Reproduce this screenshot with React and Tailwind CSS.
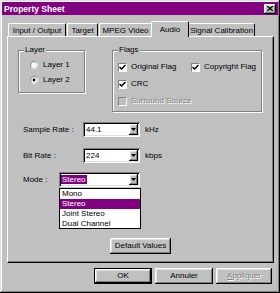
import React from 'react';

const raised =
  'shadow-[inset_-1px_-1px_0_#000,inset_1px_1px_0_#fff,inset_-2px_-2px_0_#808080,inset_2px_2px_0_#dfdfdf]';
const sunken =
  'shadow-[inset_1px_1px_0_#808080,inset_-1px_-1px_0_#fff,inset_2px_2px_0_#000,inset_-2px_-2px_0_#dfdfdf]';

const Tab = ({ label, active, width }) => (
  <div
    className={
      active
        ? `relative z-10 -mx-[2px] h-[16px] -mb-[1px] pt-[3px] text-center bg-[#c0c0c0] border-t border-l border-white border-r border-r-black rounded-t-[2px] ${width}`
        : `h-[13px] pt-[2px] text-center border-t border-l border-white border-r border-r-black rounded-t-[2px] ${width}`
    }
  >
    {label}
  </div>
);

const Radio = ({ checked }) => (
  <svg width="8" height="8" viewBox="0 0 8 8">
    <circle cx="4" cy="4" r="3.5" fill="#fff" stroke="#808080" />
    <path d="M6.6 1.4 A3.5 3.5 0 0 1 1.4 6.6" fill="none" stroke="#fff" />
    {checked && <circle cx="4" cy="4" r="1.4" fill="#000" />}
  </svg>
);

const Check = ({ checked, disabled }) => (
  <span
    className={`flex items-center justify-center w-[9px] h-[9px] border-t border-l border-[#808080] border-b-white border-r-white border-b border-r ${
      disabled ? 'bg-[#c0c0c0]' : 'bg-white'
    }`}
  >
    {checked && (
      <svg width="7" height="7" viewBox="0 0 7 7">
        <path d="M0.5 3 L2.5 5 L6.5 1" fill="none" stroke="#000" strokeWidth="1.5" />
      </svg>
    )}
  </span>
);

const Combo = ({ value, width, selected }) => (
  <div className={`flex items-center h-[15px] bg-white ${sunken} ${width} pl-[2px] pr-[2px]`}>
    <div className="flex-1 min-w-0">
      {selected ? (
        <span className="bg-[#800080] text-white px-[1px]">{value}</span>
      ) : (
        <span className="px-[1px]">{value}</span>
      )}
    </div>
    <div className={`flex items-center justify-center w-[9px] h-[11px] bg-[#c0c0c0] ${raised}`}>
      <svg width="5" height="3" viewBox="0 0 5 3">
        <path d="M0 0 H5 L2.5 3 Z" fill="#000" />
      </svg>
    </div>
  </div>
);

const GroupBox = ({ title, className, children }) => (
  <div className={`relative border border-[#808080] shadow-[1px_1px_0_#fff,inset_1px_1px_0_#fff] ${className}`}>
    <span className="absolute -top-[6px] left-[5px] bg-[#c0c0c0] px-[1px] leading-[10px]">{title}</span>
    {children}
  </div>
);

const Button = ({ children, className, isDefault, disabled }) => (
  <div
    className={`flex items-center justify-center bg-[#c0c0c0] ${
      isDefault ? 'border border-black' : ''
    } ${className}`}
  >
    <div className={`flex-1 self-stretch flex items-center justify-center ${raised}`}>
      {disabled ? (
        <span className="text-[#808080] [text-shadow:1px_1px_0_#fff]">{children}</span>
      ) : (
        children
      )}
    </div>
  </div>
);

export default function App() {
  return (
    <div className="w-[280px] h-[293px] bg-[#c0c0c0] p-[2px] flex flex-col whitespace-nowrap text-black text-[8px] leading-[10px] font-['Liberation_Sans',Arial,sans-serif] shadow-[inset_-1px_-1px_0_#000,inset_1px_1px_0_#dfdfdf,inset_-2px_-2px_0_#808080,inset_2px_2px_0_#fff]">
      {/* title bar */}
      <div className="h-[13px] bg-[#800080] flex items-center justify-between pl-[2px] pr-[2px]">
        <span className="text-white font-bold text-[8.5px]">Property Sheet</span>
        <div className={`w-[12px] h-[10px] bg-[#c0c0c0] flex items-center justify-center ${raised}`}>
          <svg width="6" height="5" viewBox="0 0 6 5">
            <path d="M0 0 L6 5 M6 0 L0 5" stroke="#000" strokeWidth="1.3" />
          </svg>
        </div>
      </div>

      {/* tabs */}
      <div className="flex items-end h-[21px] pl-[6px] gap-[1px]">
        <Tab label="Input / Output" width="w-[58px]" />
        <Tab label="Target" width="w-[31px]" />
        <Tab label="MPEG Video" width="w-[53px]" />
        <Tab label="Audio" active width="w-[38px]" />
        <Tab label="Signal Calibration" width="w-[67px]" />
      </div>

      {/* panel */}
      <div className="ml-[5px] mr-[4px] h-[227px] border-t border-l border-white border-r border-b border-r-black border-b-black shadow-[inset_-1px_-1px_0_#808080] flex flex-col">
        <div className="flex items-start mt-[13px] ml-[10px] gap-[27px]">
          <GroupBox title="Layer" className="w-[67px] h-[43px]">
            <div className="flex flex-col gap-[5px] pl-[11px] pt-[9px]">
              <div className="flex items-center gap-[5px] h-[10px]">
                <Radio />
                <span>Layer 1</span>
              </div>
              <div className="flex items-center gap-[5px] h-[10px]">
                <Radio checked />
                <span>Layer 2</span>
              </div>
            </div>
          </GroupBox>
          <GroupBox title="Flags" className="w-[150px] h-[62px]">
            <div className="flex flex-col gap-[7px] pl-[5px] pt-[11px]">
              <div className="flex h-[10px]">
                <div className="flex items-center gap-[4px] w-[73px]">
                  <Check checked />
                  <span>Original Flag</span>
                </div>
                <div className="flex items-center gap-[4px]">
                  <Check checked />
                  <span>Copyright Flag</span>
                </div>
              </div>
              <div className="flex items-center gap-[4px] h-[10px]">
                <Check checked />
                <span>CRC</span>
              </div>
              <div className="flex items-center gap-[4px] h-[10px]">
                <Check disabled />
                <span className="text-[#808080] [text-shadow:1px_1px_0_#fff]">Surround Source</span>
              </div>
            </div>
          </GroupBox>
        </div>

        <div className="flex flex-col pl-[15px] mt-[10px]">
          <div className="flex items-center h-[15px]">
            <span className="w-[60px]">Sample Rate :</span>
            <Combo value="44.1" width="w-[57px]" />
            <span className="ml-[5px]">kHz</span>
          </div>
          <div className="flex items-center h-[15px] mt-[11px]">
            <span className="w-[60px]">Bit Rate :</span>
            <Combo value="224" width="w-[57px]" />
            <span className="ml-[5px]">kbps</span>
          </div>
          <div className="flex items-center h-[15px] mt-[9px]">
            <span className="w-[36px]">Mode :</span>
            <div className="relative">
              <Combo value="Stereo" width="w-[81px]" selected />
              <div className="absolute left-0 top-[16px] w-[82px] bg-white border border-black z-20">
                <div className="h-[10px] px-[2px]">Mono</div>
                <div className="h-[10px] px-[2px] bg-[#800080] text-white">Stereo</div>
                <div className="h-[10px] px-[2px]">Joint Stereo</div>
                <div className="h-[9px] px-[2px]">Dual Channel</div>
              </div>
            </div>
          </div>
        </div>

        <div className="flex justify-center mt-[51px]">
          <Button className="w-[61px] h-[16px]">Default Values</Button>
        </div>
      </div>

      {/* bottom buttons */}
      <div className="flex justify-end gap-[3px] mt-[5px] pr-[6px]">
        <Button isDefault className="w-[58px] h-[16px]">OK</Button>
        <Button className="w-[58px] h-[16px]">Annuler</Button>
        <Button disabled className="w-[56px] h-[16px]">
          <span className="underline">A</span>ppliquer
        </Button>
      </div>
    </div>
  );
}
